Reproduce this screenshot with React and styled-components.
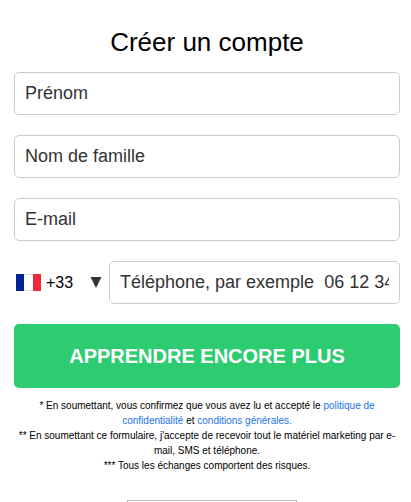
import styled, { createGlobalStyle } from 'styled-components';

const GlobalStyle = createGlobalStyle`
  body {
    margin: 0;
    background: #fff;
    overflow: hidden;
  }
`;

const StyledSignup = styled.div`
  box-sizing: border-box;
  width: 411px;
  height: 502px;
  padding: 27px 11px 0 14px;
  overflow: hidden;
  color: #000;
  font-family: 'Liberation Sans', Arial, sans-serif;
`;

const Title = styled.h1`
  margin: 0 0 15px;
  font-size: 26px;
  font-weight: 400;
  line-height: 30px;
  text-align: center;
`;

const Form = styled.form`
  display: flex;
  flex-direction: column;
  gap: 20px;
`;

const Input = styled.input`
  box-sizing: border-box;
  flex: 1;
  width: 100%;
  min-width: 0;
  height: 43px;
  min-height: 43px;
  padding: 0 10px;
  border: 1px solid #ccc;
  border-radius: 5px;
  background: #fff;
  color: #333;
  font-family: inherit;
  font-size: 18px;

  &::placeholder {
    color: #333;
    opacity: 1;
  }
`;

const PhoneRow = styled.div`
  display: flex;
  height: 43px;
`;

const CountryCode = styled.div`
  box-sizing: border-box;
  display: flex;
  align-items: center;
  flex: none;
  width: 95px;
  padding-left: 2px;
  font-size: 16px;
`;

const Flag = styled.svg`
  width: 25px;
  height: 17px;
  margin-right: 5px;
`;

const Arrow = styled.svg`
  width: 12px;
  height: 11px;
  margin: 0 7px 0 auto;
`;

const Submit = styled.button`
  height: 64px;
  padding: 0;
  border: 0;
  border-radius: 5px;
  background: #2ecc71;
  color: #fff;
  font-family: inherit;
  font-size: 20px;
  font-weight: 700;
  text-transform: uppercase;
`;

const Terms = styled.div`
  margin-top: 10px;
  font-size: 10px;
  line-height: 15px;
  text-align: center;
`;

const TermsLink = styled.a`
  color: #1a73e8;
  text-decoration: none;
`;

const Badge = styled.div`
  box-sizing: border-box;
  width: 170px;
  height: 40px;
  margin: 27px auto 0 113px;
  border: 1px solid #bbb;
`;

const fields = [
  { name: 'firstName', placeholder: 'Prénom' },
  { name: 'lastName', placeholder: 'Nom de famille' },
  { name: 'email', placeholder: 'E-mail' },
];

function PhoneField() {
  return (
    <PhoneRow>
      <CountryCode>
        <Flag viewBox="0 0 25 17">
          <rect width="25" height="17" fill="#fff" />
          <rect width="8" height="17" fill="#002395" />
          <rect x="17" width="8" height="17" fill="#ed2939" />
          <path d="M8 .5h9M8 16.5h9" stroke="#ddd" />
        </Flag>
        <span>+33</span>
        <Arrow viewBox="0 0 12 11">
          <path d="M.5 0h11L6 11z" fill="#333" />
        </Arrow>
      </CountryCode>
      <Input name="phone" placeholder={'Téléphone, par exemple \u00a006 12 34 56 78'} />
    </PhoneRow>
  );
}

function App() {
  return (
    <StyledSignup>
      <GlobalStyle />
      <Title>Créer un compte</Title>
      <Form>
        {fields.map((field) => (
          <Input key={field.name} name={field.name} placeholder={field.placeholder} />
        ))}
        <PhoneField />
        <Submit type="button">Apprendre encore plus</Submit>
      </Form>
      <Terms>
        * En soumettant, vous confirmez que vous avez lu et accepté le{' '}
        <TermsLink href="#">politique de confidentialité</TermsLink> et{' '}
        <TermsLink href="#">conditions générales.</TermsLink>
        <br />
        ** En soumettant ce formulaire, j'accepte de recevoir tout le matériel marketing par e-mail,
        SMS et téléphone.
        <br />
        *** Tous les échanges comportent des risques.
      </Terms>
      <Badge />
    </StyledSignup>
  );
}

export default App;
